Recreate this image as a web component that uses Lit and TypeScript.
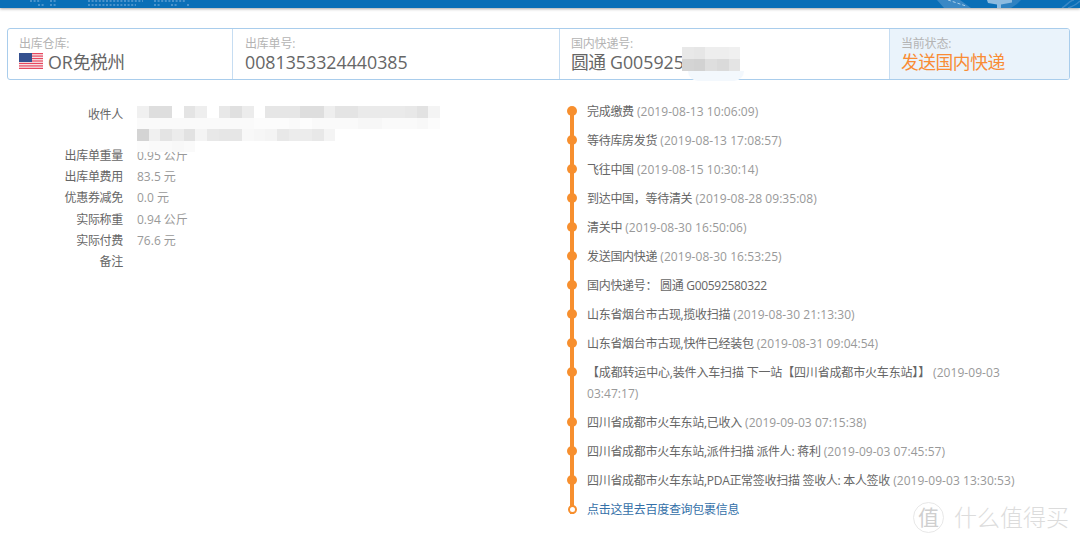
import { LitElement, html, css, svg } from "lit";
import { customElement } from "lit/decorators.js";

type Step = { t: string; d?: [string, string]; link?: boolean; wide?: boolean };
const steps: Step[] = [
  { t: "完成缴费", d: ["(2019-08-13", "10:06:09)"] },
  { t: "等待库房发货", d: ["(2019-08-13", "17:08:57)"] },
  { t: "飞往中国", d: ["(2019-08-15", "10:30:14)"] },
  { t: "到达中国，等待清关", d: ["(2019-08-28", "09:35:08)"] },
  { t: "清关中", d: ["(2019-08-30", "16:50:06)"] },
  { t: "发送国内快递", d: ["(2019-08-30", "16:53:25)"] },
  { t: "国内快递号： 圆通 G00592580322" },
  { t: "山东省烟台市古现,揽收扫描", d: ["(2019-08-30", "21:13:30)"] },
  { t: "山东省烟台市古现,快件已经装包", d: ["(2019-08-31", "09:04:54)"] },
  { t: "【成都转运中心,装件入车扫描 下一站【四川省成都市火车东站】】", d: ["(2019-09-03", "03:47:17)"], wide: true },
  { t: "四川省成都市火车东站,已收入", d: ["(2019-09-03", "07:15:38)"] },
  { t: "四川省成都市火车东站,派件扫描 派件人: 蒋利", d: ["(2019-09-03", "07:45:57)"] },
  { t: "四川省成都市火车东站,PDA正常签收扫描 签收人: 本人签收", d: ["(2019-09-03", "13:30:53)"] },
  { t: "点击这里去百度查询包裹信息", link: true },
];

const rows: [string, string][] = [
  ["出库单重量", "0.95 公斤"],
  ["出库单费用", "83.5 元"],
  ["优惠券减免", "0.0 元"],
  ["实际称重", "0.94 公斤"],
  ["实际付费", "76.6 元"],
  ["备注", ""],
];

const flag = svg`<svg class="flag" width="24" height="16" viewBox="0 0 24 16">
  <rect width="24" height="16" fill="#f6eef0"/>
  ${[0, 2, 4, 6, 8, 10, 12].map((i) => svg`<rect y=${(i * 16) / 13} width="24" height="1.23" fill="#e8475f"/>`)}
  <rect width="13" height="9" fill="#34508f"/>
</svg>`;

const headerArt = svg`<svg class="art" width="1080" height="8" viewBox="0 0 1080 8">
  <g stroke="#4a93cc" stroke-width="2" stroke-dasharray="2 1.6" fill="none">
    <path d="M30 1H41M50 1H57M88 1H143M154 1H185"/>
    <path d="M38 5H45M50 5H57M88 5H136M154 5H161M171 5H177M187 5H189"/>
  </g>
  <path d="M937 0H960L971 8H944Z" fill="#3a88c5"/>
  <path d="M948 0L966 6" stroke="#a9cfea" stroke-width="1" stroke-dasharray="3 2" fill="none"/>
  <path d="M1003 0H1021L1017 4L1011 8H999Z" fill="#2f82c1"/>
  <path d="M987 0H1012V2.500L1001 4.500V8H997V4.500L988 3Z" fill="#8dbbdf"/>
  <path d="M1062 8C1066 6 1070 0 1074 0M1068 8C1074 6 1078 3 1080 1" stroke="#3a88c5" stroke-width="1.500" fill="none"/>
</svg>`;

@customElement("app-root")
export class AppRoot extends LitElement {
  static styles = css`
    :host { display: block; position: relative; width: 1080px; height: 543px; overflow: hidden; background: #fff; font-family: "Open Sans", "Noto Sans CJK SC", sans-serif; }
    .top { height: 8px; background: #0a6fb7; box-shadow: 0 1px 3px rgba(0,0,0,.35); overflow: hidden; }
    .art { display: block; }
    .bar { display: flex; height: 52px; margin: 20px 10px 0 7px; box-sizing: border-box; border: 1px solid #a9cdec; border-radius: 3px; overflow: hidden; }
    .cell { box-sizing: border-box; padding: 8px 0 0 11px; border-right: 1px solid #c6ddf2; }
    .c1 { width: 225px; } .c2 { width: 327px; padding-left: 12px; } .c3 { width: 330px; } .c4 { flex: 1; border-right: 0; background: #eaf3fb; padding-left: 11px; }
    .lab { font-size: 12px; line-height: 14px; color: #b4b4b4; letter-spacing: -.2px; }
    .val { font-size: 17.8px; line-height: 22px; color: #666; display: flex; align-items: center; gap: 5px; white-space: pre; }
    .val.st { color: #f98c35; letter-spacing: -.5px; }
    .cjk { letter-spacing: -.6px; }
    .flag { margin-bottom: 3px; flex: none; }
    .main { display: flex; padding-top: 21px; }
    .left { width: 564px; flex: none; font-size: 12px; color: #666; line-height: 21.2px; padding-top: 3px; }
    .row { display: flex; }
    .k { width: 123px; text-align: right; flex: none; color: #666; letter-spacing: -.3px; }
    .v { margin-left: 14px; color: #999; }
    .row.first { height: 41px; }
    .tl { position: relative; width: 460px; font-size: 12px; line-height: 21px; color: #666; }
    .tl::before { content: ""; position: absolute; left: 6px; top: 6px; bottom: 14px; width: 4px; background: #f78f2e; }
    .step { position: relative; padding: 0 0 8px 23px; }
    .dot { position: absolute; left: 3px; top: 5px; width: 10px; height: 10px; border-radius: 50%; background: #f78f2e; }
    .dot.ring { box-sizing: border-box; background: #fff; border: 2.5px solid #f78f2e; top: 6px; left: 3.5px; width: 9px; height: 9px; }
    .t { letter-spacing: -.3px; }
    .t.wide { letter-spacing: -.17px; }
    .d { color: #999; letter-spacing: .05px; }
    .d span { white-space: nowrap; }
    .link { color: #3470a8; letter-spacing: -.3px; }
    .blur { position: absolute; display: grid; filter: blur(.6px); }
    .blur i { display: block; }
    .fuzz { position: absolute; left: 688px; top: 71px; width: 56px; height: 10px; background: #f3f8fd; border-radius: 0 0 14px 14px; }
    .wm { position: absolute; left: 913px; top: 501px; display: flex; align-items: center; gap: 10px; color: #dcdcdc; }
    .wmc { width: 29px; height: 29px; border: 1px solid #e8e8e8; border-radius: 50%; text-align: center; font-size: 21px; line-height: 28px; color: #cfcfcf; }
    .wmt { font-size: 23px; line-height: 32px; font-weight: 300; }
  `;

  private mosaic(x: number, y: number, cols: number, cell: number, h: number, vals: number[]) {
    return html`<div class="blur" style="left:${x}px;top:${y}px;grid-template-columns:repeat(${cols},${cell}px);grid-auto-rows:${h}px">
      ${vals.map((v) => html`<i style="background:rgb(${v},${v},${v})"></i>`)}
    </div>`;
  }

  render() {
    return html`
      <div class="top">${headerArt}</div>
      <div class="bar">
        <div class="cell c1"><div class="lab">出库仓库:</div><div class="val">${flag}<span>OR<span class="cjk">免税州</span></span></div></div>
        <div class="cell c2"><div class="lab">出库单号:</div><div class="val">0081353324440385</div></div>
        <div class="cell c3"><div class="lab">国内快递号:</div><div class="val"><span><span class="cjk">圆通</span> G005925</span></div></div>
        <div class="cell c4"><div class="lab">当前状态:</div><div class="val st">发送国内快递</div></div>
      </div>
      <div class="main">
        <div class="left">
          <div class="row first"><div class="k">收件人</div></div>
          ${rows.map(([k, v]) => html`<div class="row"><div class="k">${k}</div><div class="v">${v}</div></div>`)}
        </div>
        <div class="tl">
          ${steps.map((s, i) => html`<div class="step"><span class="dot ${i === steps.length - 1 ? "ring" : ""}"></span>${s.link
            ? html`<span class="link">${s.t}</span>`
            : html`<span class="t ${s.wide ? "wide" : ""}">${s.t}</span>${s.d ? html` <span class="d"><span>${s.d[0]}</span> <span>${s.d[1]}</span></span>` : ""}`}</div>`)}
        </div>
      </div>
      ${this.mosaic(137, 106, 26, 11.67, 11.67, [
        240,222,222,255,228,238,255,232,224,236,255,230,230,230,222,222,238,228,228,234,234,234,234,232,226,244,
        250,250,250,250,250,250,250,250,250,250,252,252,252,250,253,250,250,250,250,247,247,250,250,250,248,252,
        212,240,228,236,226,244,232,230,230,248,246,244,232,236,236,232,244,255,255,255,255,255,255,255,255,255,
      ])}
      ${this.mosaic(137, 141, 5, 11.67, 11, [252, 250, 250, 248, 250])}
      <div class="fuzz"></div>
      ${this.mosaic(682, 47, 5, 11.67, 12, [232, 230, 238, 238, 240, 212, 210, 222, 218, 228])}
      <div class="wm"><div class="wmc">值</div><div class="wmt">什么值得买</div></div>
    `;
  }
}
